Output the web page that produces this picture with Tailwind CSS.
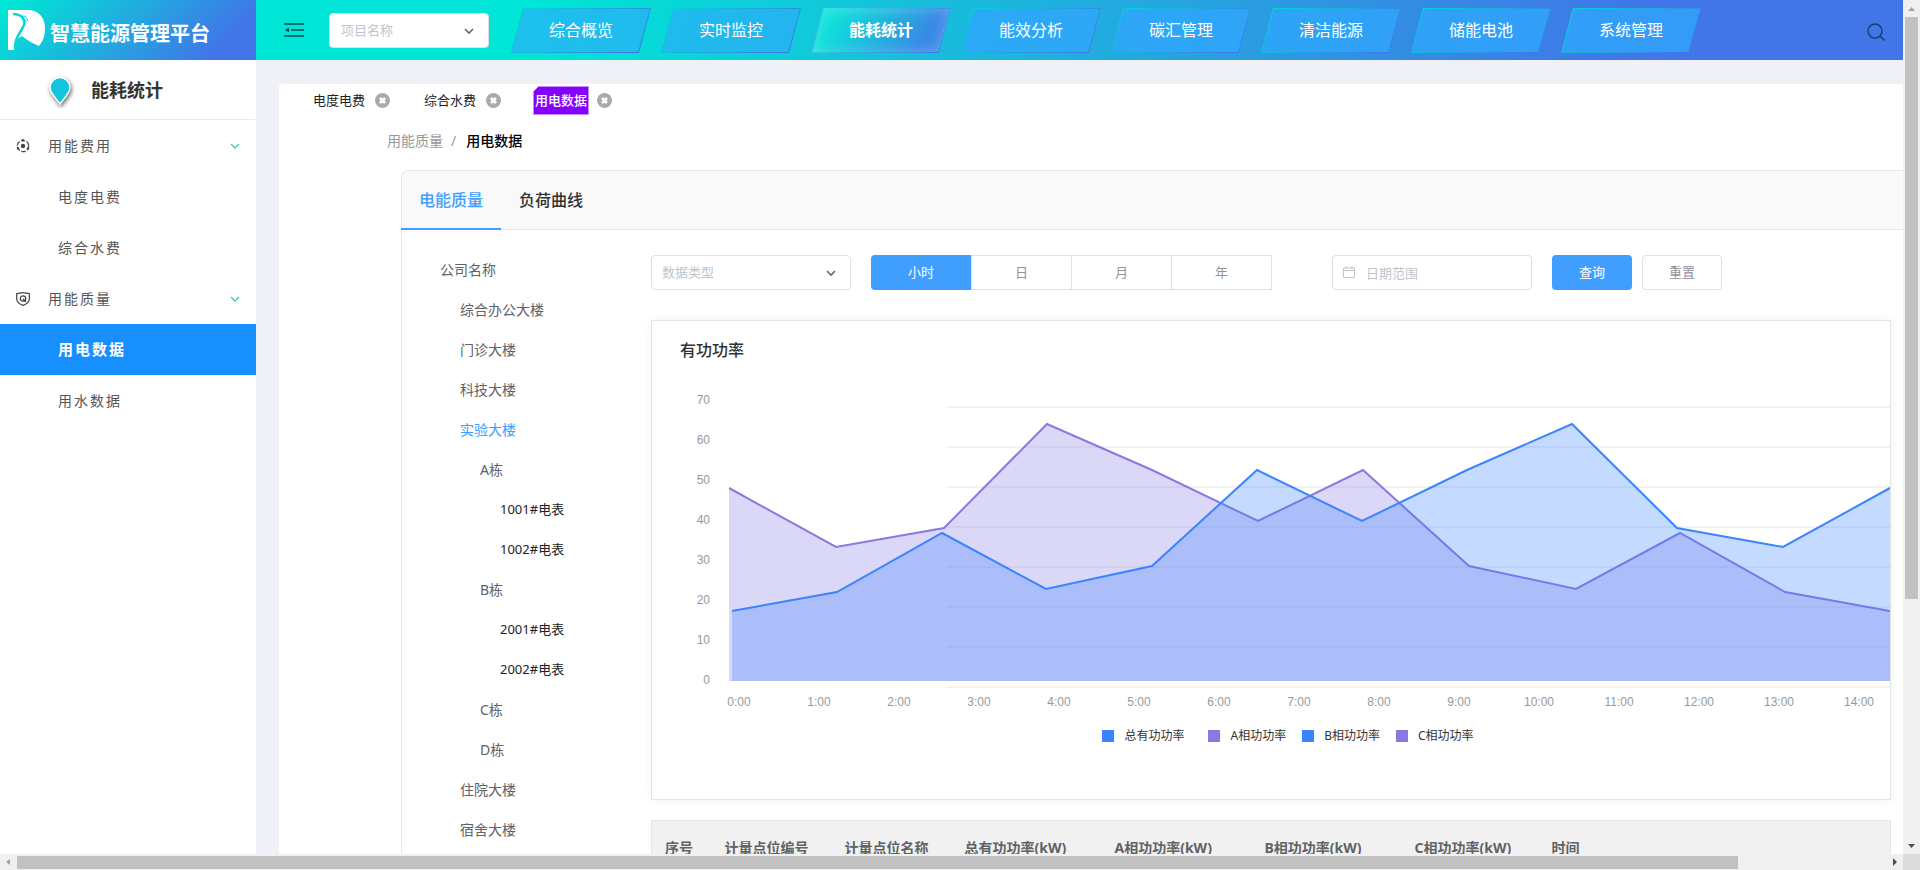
<!DOCTYPE html>
<html lang="zh-CN">
  <head>
    <meta charset="UTF-8" />
    <meta name="viewport" content="width=device-width, initial-scale=1.0" />
    <title>智慧能源管理平台</title>
    <script src="https://cdn.jsdelivr.net/npm/@tailwindcss/browser@4"></script>
    <style>
      body {
        font-family: "Noto Sans", "Noto Sans CJK SC", sans-serif;
      }
    </style>
  </head>
  <body class="h-screen overflow-hidden flex flex-col bg-[#f0f1f6] text-sm text-[#606266]">
    <div class="flex flex-1 min-h-0">
      <div class="flex flex-col flex-1 min-w-0">
        <!-- Header -->
        <header class="flex h-15 shrink-0">
          <div
            class="w-64 shrink-0 flex items-center pl-2 bg-[linear-gradient(135deg,#00e5d5_5%,#4175e8_85%)]"
          >
            <svg class="w-[37px] h-10" viewBox="0 0 37 40" fill="none">
              <path d="M0 0h22c9 1 15 8 15 18 0 8-2 13-6 18-7-3-12-6-17-10C6 30 5 35 8 40H0z" fill="#fff" />
              <path
                d="M5 4c8 0 13 5 11 11-2 5-5 8-7 13-2 4-2 8-2 12"
                stroke="#05d8d5"
                stroke-width="2.5"
              />
              <path d="M15 6c3 0 4 2 5 5M14 10c3-1 4 0 4 2" stroke="#05d8d5" stroke-width="1" />
            </svg>
            <h1 class="ml-[5px] mt-2 text-xl font-bold text-white">智慧能源管理平台</h1>
          </div>
          <div
            class="flex-1 min-w-0 flex items-center pl-7 pr-[18px] bg-[linear-gradient(100deg,#00e5d5_17%,#4175e8_84%)]"
          >
            <button aria-label="收起菜单" class="shrink-0">
              <svg class="w-5 h-4" viewBox="0 0 20 16" fill="none" stroke="#064b4f" stroke-width="1.6">
                <path d="M0 2h20M7 8h13M0 14h20" />
                <path d="M5 5.5v5L1 8z" fill="#064b4f" stroke="none" />
              </svg>
            </button>
            <div class="relative w-40 shrink-0 ml-[25px]">
              <select
                aria-label="项目名称"
                class="appearance-none w-full h-[35px] rounded border border-[#dcdfe6] bg-white pl-[11px] text-[13px] text-[#c0c4cc]"
              >
                <option>项目名称</option>
              </select>
              <svg
                class="absolute right-[15px] top-[14px] w-[10px] h-2 pointer-events-none"
                viewBox="0 0 10 8"
                fill="none"
                stroke="#5f6670"
                stroke-width="1.6"
              >
                <path d="M1 2l4 4 4-4" />
              </svg>
            </div>
            <nav class="flex gap-[22px] ml-7 text-base text-white">
              <a href="#" class="relative w-32 h-[45px] shrink-0 flex items-center justify-center">
                <span class="absolute inset-0 -skew-x-[15deg] border bg-[#30a6fb]/60 [border-image:linear-gradient(135deg,#00d5d8,#4175e8)_1]"></span>
                <span class="relative">综合概览</span>
              </a>
              <a href="#" class="relative w-32 h-[45px] shrink-0 flex items-center justify-center">
                <span class="absolute inset-0 -skew-x-[15deg] border bg-[#30a6fb]/60 [border-image:linear-gradient(135deg,#00d5d8,#4175e8)_1]"></span>
                <span class="relative">实时监控</span>
              </a>
              <a href="#" class="relative w-32 h-[45px] shrink-0 flex items-center justify-center font-bold">
                <span class="absolute inset-0 -skew-x-[15deg] border bg-[linear-gradient(110deg,#0fe0da_10%,#1fb4df_50%,#3a88e6_85%)] shadow-[inset_0_0_14px_rgba(255,255,255,0.25)] [border-image:linear-gradient(135deg,#2fe5dc,#4175e8)_1]"></span>
                <span class="relative">能耗统计</span>
              </a>
              <a href="#" class="relative w-32 h-[45px] shrink-0 flex items-center justify-center">
                <span class="absolute inset-0 -skew-x-[15deg] border bg-[#30a6fb]/80 [border-image:linear-gradient(135deg,#00d5d8,#4175e8)_1]"></span>
                <span class="relative">能效分析</span>
              </a>
              <a href="#" class="relative w-32 h-[45px] shrink-0 flex items-center justify-center">
                <span class="absolute inset-0 -skew-x-[15deg] border bg-[#30a6fb]/80 [border-image:linear-gradient(135deg,#00d5d8,#4175e8)_1]"></span>
                <span class="relative">碳汇管理</span>
              </a>
              <a href="#" class="relative w-32 h-[45px] shrink-0 flex items-center justify-center">
                <span class="absolute inset-0 -skew-x-[15deg] border bg-[#30a6fb]/80 [border-image:linear-gradient(135deg,#00d5d8,#4175e8)_1]"></span>
                <span class="relative">清洁能源</span>
              </a>
              <a href="#" class="relative w-32 h-[45px] shrink-0 flex items-center justify-center">
                <span class="absolute inset-0 -skew-x-[15deg] border bg-[#30a6fb]/80 [border-image:linear-gradient(135deg,#00d5d8,#4175e8)_1]"></span>
                <span class="relative">储能电池</span>
              </a>
              <a href="#" class="relative w-32 h-[45px] shrink-0 flex items-center justify-center">
                <span class="absolute inset-0 -skew-x-[15deg] border bg-[#30a6fb]/80 [border-image:linear-gradient(135deg,#00d5d8,#4175e8)_1]"></span>
                <span class="relative">系统管理</span>
              </a>
            </nav>
            <button aria-label="搜索" class="ml-auto mt-1">
              <svg class="w-[18px] h-[18px]" viewBox="0 0 18 18" fill="none" stroke="#1d3a70" stroke-width="1.4">
                <circle cx="8" cy="8" r="7" />
                <path d="M13 13l4.5 4.5" />
              </svg>
            </button>
          </div>
        </header>

        <div class="flex flex-1 min-h-0">
          <!-- Sidebar -->
          <aside class="w-64 shrink-0 bg-white">
            <div class="flex items-center h-15 mr-px border-b border-[#ebebeb] pl-[46px]">
              <svg class="w-[30px] h-8 mt-1" viewBox="0 0 30 32">
                <path
                  d="M14 28C9 21 4 17 4 11.500a10 10 0 0 1 20 0C24 17 19 21 14 28z"
                  fill="#12c5dd"
                  stroke="#fff"
                  stroke-width="1.5"
                  class="drop-shadow-[1px_2px_2px_rgba(0,0,0,0.6)]"
                />
              </svg>
              <h2 class="ml-[15px] text-lg font-bold text-[#333]">能耗统计</h2>
            </div>
            <nav class="tracking-[2px] text-[#555]">
              <a href="#" class="flex items-center h-[51px] pl-4 pr-4">
                <svg class="w-[14px] h-[14px]" viewBox="0 0 14 14" fill="none" stroke="#444">
                  <circle cx="7" cy="7" r="5.7" stroke-width="1.3" stroke-dasharray="4.5 1.5" />
                  <circle cx="7" cy="7" r="2.2" fill="#444" stroke="none" />
                  <path d="M7 0v2.500M1 10l2-1M13 10l-2-1" stroke-width="1.6" />
                </svg>
                <span class="ml-[18px]">用能费用</span>
                <svg class="w-[10px] h-[6px] ml-auto" viewBox="0 0 10 6" fill="none" stroke="#3fcf9f" stroke-width="1.3">
                  <path d="M1 1l4 4 4-4" />
                </svg>
              </a>
              <a href="#" class="flex items-center h-[51px] pl-[58px]">电度电费</a>
              <a href="#" class="flex items-center h-[51px] pl-[58px]">综合水费</a>
              <a href="#" class="flex items-center h-[51px] pl-4 pr-4">
                <svg class="w-[14px] h-[14px]" viewBox="0 0 14 14" fill="none" stroke="#444">
                  <path d="M.7 1.5C3 1.500 5 .7 7 .7s4 .8 6.300.8V7c0 3-2.500 5-6.300 6.400C3.200 12 .7 10 .7 7z" stroke-width="1.2" />
                  <circle cx="7" cy="6.5" r="2.7" stroke-width="1.3" />
                  <path d="M7 7l3 2.800" stroke-width="1.4" />
                </svg>
                <span class="ml-[18px]">用能质量</span>
                <svg class="w-[10px] h-[6px] ml-auto" viewBox="0 0 10 6" fill="none" stroke="#3fcf9f" stroke-width="1.3">
                  <path d="M1 1l4 4 4-4" />
                </svg>
              </a>
              <a href="#" class="flex items-center h-[51px] pl-[58px] bg-[#188fff] text-white text-[15px] font-bold">用电数据</a>
              <a href="#" class="flex items-center h-[51px] pl-[58px]">用水数据</a>
            </nav>
          </aside>

          <!-- Main Content Area -->
          <main class="flex-1 min-w-0 ml-[23px] mt-6 bg-white rounded-tl overflow-hidden">
            <!-- Opened pages -->
            <div class="flex pl-[34px] pt-px text-[13px] text-[#222]">
              <div class="flex items-center w-[111px] h-[31px]">
                <a href="#">电度电费</a>
                <button aria-label="关闭" class="ml-[10px]">
                  <svg class="w-[15px] h-[15px]" viewBox="0 0 15 15">
                    <circle cx="7.5" cy="7.5" r="7.5" fill="#aaa" />
                    <path d="M5 5l5 5M10 5l-5 5" stroke="#fff" stroke-width="2.6" />
                  </svg>
                </button>
              </div>
              <div class="flex items-center w-[109px] h-[31px]">
                <a href="#">综合水费</a>
                <button aria-label="关闭" class="ml-[10px]">
                  <svg class="w-[15px] h-[15px]" viewBox="0 0 15 15">
                    <circle cx="7.5" cy="7.5" r="7.5" fill="#aaa" />
                    <path d="M5 5l5 5M10 5l-5 5" stroke="#fff" stroke-width="2.6" />
                  </svg>
                </button>
              </div>
              <div class="flex items-center h-[31px]">
                <a
                  href="#"
                  class="flex items-center h-[29px] px-px border border-[#c58cff] bg-[#8400ff] text-white font-medium [clip-path:polygon(6px_0,100%_0,100%_100%,0_100%,0_6px)]"
                  >用电数据</a
                >
                <button aria-label="关闭" class="ml-2">
                  <svg class="w-[15px] h-[15px]" viewBox="0 0 15 15">
                    <circle cx="7.5" cy="7.5" r="7.5" fill="#aaa" />
                    <path d="M5 5l5 5M10 5l-5 5" stroke="#fff" stroke-width="2.6" />
                  </svg>
                </button>
              </div>
            </div>

            <!-- Breadcrumb -->
            <div class="flex items-center h-[50px] pl-[108px] text-[#999]">
              <a href="#">用能质量</a>
              <span class="ml-2">/</span>
              <span class="ml-[10px] font-medium text-black">用电数据</span>
            </div>

            <!-- Card -->
            <section class="ml-[122px] mt-1 border-l border-t border-[#e4e7ed] rounded-tl-lg">
              <div class="flex h-[59px] border-b border-[#e4e7ed] bg-[#f9f9fa] rounded-tl-lg text-base font-medium">
                <a href="#" class="flex items-center h-[59px] -ml-px px-[18px] border-b-2 border-[#409eff] text-[#409eff]">电能质量</a>
                <a href="#" class="flex items-center h-[58px] px-[18px] text-[#303133]">负荷曲线</a>
              </div>

              <div class="flex">
                <!-- Building tree -->
                <nav class="w-[249px] shrink-0 pt-5 pl-[38px]">
                  <a href="#" class="flex items-center h-10">公司名称</a>
                  <a href="#" class="flex items-center h-10 pl-5">综合办公大楼</a>
                  <a href="#" class="flex items-center h-10 pl-5">门诊大楼</a>
                  <a href="#" class="flex items-center h-10 pl-5">科技大楼</a>
                  <a href="#" class="flex items-center h-10 pl-5 text-[#409eff]">实验大楼</a>
                  <a href="#" class="flex items-center h-10 pl-10">A栋</a>
                  <a href="#" class="flex items-center h-10 pl-15 pb-[2px] text-[13px] text-[#222]">1001#电表</a>
                  <a href="#" class="flex items-center h-10 pl-15 pb-[2px] text-[13px] text-[#222]">1002#电表</a>
                  <a href="#" class="flex items-center h-10 pl-10">B栋</a>
                  <a href="#" class="flex items-center h-10 pl-15 pb-[2px] text-[13px] text-[#222]">2001#电表</a>
                  <a href="#" class="flex items-center h-10 pl-15 pb-[2px] text-[13px] text-[#222]">2002#电表</a>
                  <a href="#" class="flex items-center h-10 pl-10">C栋</a>
                  <a href="#" class="flex items-center h-10 pl-10">D栋</a>
                  <a href="#" class="flex items-center h-10 pl-5">住院大楼</a>
                  <a href="#" class="flex items-center h-10 pl-5">宿舍大楼</a>
                </nav>

                <div class="flex-1 min-w-0 pt-[25px] pr-3">
                  <!-- Filters -->
                  <form class="flex text-[13px] text-[#909399]">
                    <div class="relative w-50">
                      <select
                        aria-label="数据类型"
                        class="appearance-none w-full h-[35px] rounded border border-[#e0e0e0] bg-white pl-[10px] text-[#c0c4cc]"
                      >
                        <option>数据类型</option>
                      </select>
                      <svg
                        class="absolute right-[15px] top-[14px] w-[10px] h-2 pointer-events-none"
                        viewBox="0 0 10 8"
                        fill="none"
                        stroke="#5f6670"
                        stroke-width="1.6"
                      >
                        <path d="M1 2l4 4 4-4" />
                      </svg>
                    </div>
                    <div class="flex ml-5 h-[35px]">
                      <label class="flex items-center justify-center w-25 rounded-l bg-[#409eff] text-white">
                        <input type="radio" name="period" class="sr-only" checked />小时
                      </label>
                      <label class="flex items-center justify-center w-[101px] border border-[#e0e0e0]">
                        <input type="radio" name="period" class="sr-only" />日
                      </label>
                      <label class="flex items-center justify-center w-25 border border-l-0 border-[#e0e0e0]">
                        <input type="radio" name="period" class="sr-only" />月
                      </label>
                      <label class="flex items-center justify-center w-25 border border-l-0 border-[#e0e0e0]">
                        <input type="radio" name="period" class="sr-only" />年
                      </label>
                    </div>
                    <div class="relative w-50 ml-15">
                      <input
                        type="text"
                        aria-label="日期范围"
                        placeholder="日期范围"
                        class="w-full h-[35px] rounded border border-[#e0e0e0] pl-[33px] placeholder:text-[#c0c4cc]"
                      />
                      <svg class="absolute left-[11px] top-[11px] w-3 h-3" viewBox="0 0 12 12" fill="none" stroke="#c0c4cc">
                        <path d="M.5 2h11v9.500H.5zM.5 4.500h11M3 0v3M9 0v3" />
                      </svg>
                    </div>
                    <button type="button" class="w-20 h-[35px] ml-5 rounded bg-[#409eff] text-white">查询</button>
                    <button type="button" class="w-20 h-[35px] ml-[10px] rounded border border-[#e0e0e0]">重置</button>
                  </form>

                  <!-- Chart -->
                  <div class="mt-[30px] pb-[57px] border border-[#e4e4e4] shadow-[0_0_8px_rgba(0,0,0,0.06)]">
                    <h3 class="pt-[17px] pl-7 text-base font-medium text-[#303133]">有功功率</h3>
                    <div class="flex mt-8">
                      <div class="w-[58px] shrink-0 flex flex-col gap-7 text-right text-xs leading-3 text-[#999] font-['Liberation_Sans']">
                        <span>70</span>
                        <span>60</span>
                        <span>50</span>
                        <span>40</span>
                        <span>30</span>
                        <span>20</span>
                        <span>10</span>
                        <span>0</span>
                      </div>
                      <svg class="flex-1 min-w-0 h-[282px] ml-[19px] mt-3" viewBox="0 0 1161 282" preserveAspectRatio="none" fill="none">
                        <path
                          d="M218 1h943M218 41h943M218 81h943M218 121h943M218 161h943M218 201h943M218 241h943M218 281h943"
                          stroke="#f3f3f4"
                          stroke-width="2"
                        />
                        <path
                          d="M0 82L107 141L215 122L318 18L423 64L529 115L634 64L740 160L847 183L951 127L1056 186L1161 205V275H0z"
                          fill="#877ae0"
                          fill-opacity="0.3"
                        />
                        <path
                          d="M0 82L107 141L215 122L318 18L423 64L529 115L634 64L740 160L847 183L951 127L1056 186L1161 205"
                          stroke="#877ae0"
                          stroke-width="2"
                        />
                        <path
                          d="M3 205L108 186L213 127L317 183L423 160L528 64L633 115L738 64L843 18L948 122L1054 141L1161 82V275H3z"
                          fill="#3a84ff"
                          fill-opacity="0.3"
                        />
                        <path
                          d="M3 205L108 186L213 127L317 183L423 160L528 64L633 115L738 64L843 18L948 122L1054 141L1161 82"
                          stroke="#3a84ff"
                          stroke-width="2"
                        />
                      </svg>
                    </div>
                    <div class="flex justify-between mt-2 pl-[67px] pr-[11px] text-center text-xs leading-3 text-[#999] font-['Liberation_Sans']">
                      <span class="w-10">0:00</span>
                      <span class="w-10">1:00</span>
                      <span class="w-10">2:00</span>
                      <span class="w-10">3:00</span>
                      <span class="w-10">4:00</span>
                      <span class="w-10">5:00</span>
                      <span class="w-10">6:00</span>
                      <span class="w-10">7:00</span>
                      <span class="w-10">8:00</span>
                      <span class="w-10">9:00</span>
                      <span class="w-10">10:00</span>
                      <span class="w-10">11:00</span>
                      <span class="w-10">12:00</span>
                      <span class="w-10">13:00</span>
                      <span class="w-10">14:00</span>
                    </div>
                    <div class="flex justify-center pl-[34px] mt-[22px] text-xs leading-3 text-[#333]">
                      <span class="flex gap-[10px]"><i class="w-3 h-3 bg-[#3a84ff]"></i>总有功功率</span>
                      <span class="flex gap-[10px] ml-6"><i class="w-3 h-3 bg-[#877ae0]"></i>A相功功率</span>
                      <span class="flex gap-[10px] ml-4"><i class="w-3 h-3 bg-[#3a84ff]"></i>B相功功率</span>
                      <span class="flex gap-[10px] ml-4"><i class="w-3 h-3 bg-[#877ae0]"></i>C相功功率</span>
                    </div>
                  </div>

                  <!-- Data table -->
                  <table class="table-fixed w-full mt-5 border border-[#e4e4e4] bg-[#f1f1f1] text-left">
                    <thead>
                      <tr class="h-[54px]">
                        <th class="w-15 pl-[13px] font-bold">序号</th>
                        <th class="w-30 pl-[13px] font-bold">计量点位编号</th>
                        <th class="w-30 pl-[13px] font-bold">计量点位名称</th>
                        <th class="w-[150px] pl-[13px] font-bold">总有功功率(kW)</th>
                        <th class="w-[150px] pl-[13px] font-bold">A相功功率(kW)</th>
                        <th class="w-[150px] pl-[13px] font-bold">B相功功率(kW)</th>
                        <th class="w-[137px] pl-[13px] font-bold">C相功功率(kW)</th>
                        <th class="pl-[13px] font-bold">时间</th>
                      </tr>
                    </thead>
                  </table>
                </div>
              </div>
            </section>
          </main>
        </div>
      </div>

      <!-- Vertical scrollbar -->
      <div class="w-[17px] shrink-0 flex flex-col items-center bg-[#f0f0f0]">
        <svg class="w-[17px] h-[17px] shrink-0" viewBox="0 0 17 17"><path d="M5 11l3.500-4 3.500 4z" fill="#a3a3a3" /></svg>
        <div class="w-[13px] h-[582px] bg-[#c1c1c1]"></div>
        <svg class="w-[17px] h-[17px] shrink-0 mt-auto" viewBox="0 0 17 17"><path d="M5 7l3.500 4L12 7z" fill="#505050" /></svg>
      </div>
    </div>

    <!-- Horizontal scrollbar -->
    <div class="flex h-4 shrink-0">
      <div class="flex items-center flex-1 bg-[#f0f0f0]">
        <svg class="w-[17px] h-4 shrink-0" viewBox="0 0 17 16"><path d="M10 5L6 8l4 3z" fill="#a3a3a3" /></svg>
        <div class="w-[1721px] h-[13px] bg-[#c1c1c1]"></div>
        <svg class="w-[17px] h-4 shrink-0 ml-auto" viewBox="0 0 17 16"><path d="M7 4l4 4-4 4z" fill="#505050" /></svg>
      </div>
      <div class="w-[17px] bg-[#dcdcdc]"></div>
    </div>
  </body>
</html>
